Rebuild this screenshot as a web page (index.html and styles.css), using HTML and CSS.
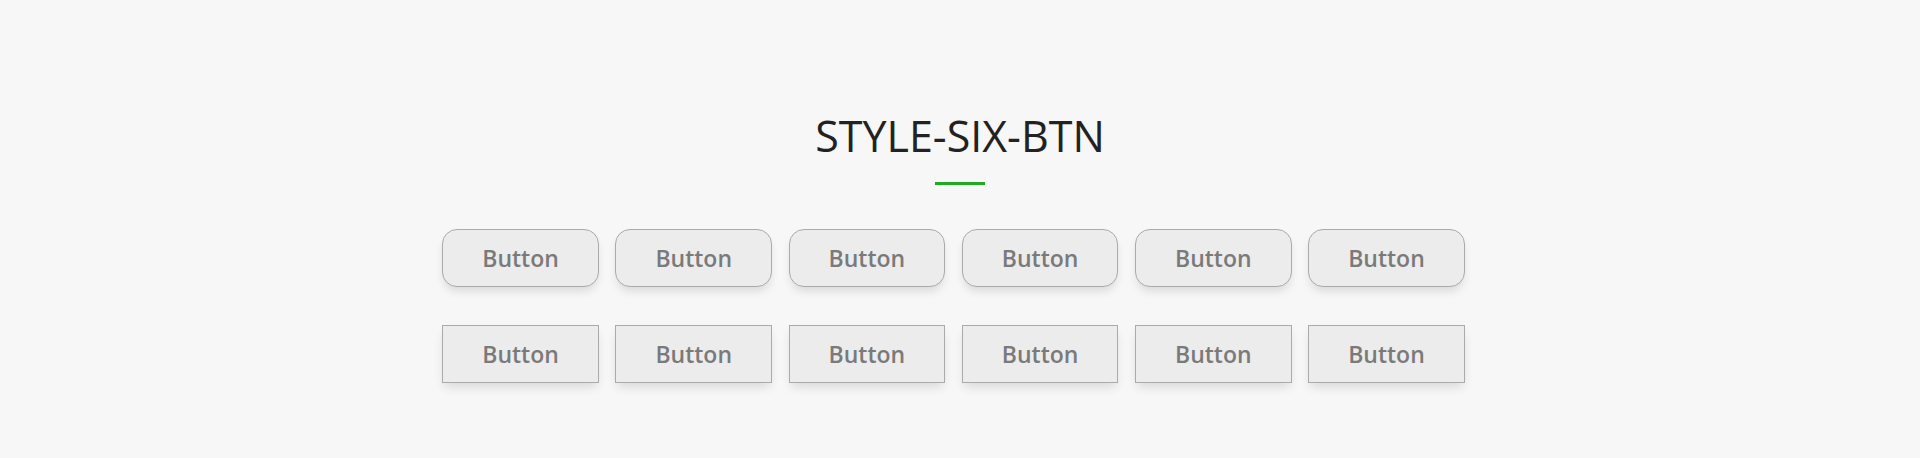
FILE: index.html
```html
<!DOCTYPE html>
<html lang="en">
<head>
<meta charset="utf-8">
<title>Style Six Btn</title>
<link rel="stylesheet" href="styles.css">
</head>
<body>
<section class="section">
  <h2 class="title">STYLE-SIX-BTN</h2>
  <div class="divider"></div>
  <div class="row">
    <button class="btn btn-round">Button</button>
    <button class="btn btn-round">Button</button>
    <button class="btn btn-round">Button</button>
    <button class="btn btn-round">Button</button>
    <button class="btn btn-round">Button</button>
    <button class="btn btn-round">Button</button>
  </div>
  <div class="row">
    <button class="btn btn-square">Button</button>
    <button class="btn btn-square">Button</button>
    <button class="btn btn-square">Button</button>
    <button class="btn btn-square">Button</button>
    <button class="btn btn-square">Button</button>
    <button class="btn btn-square">Button</button>
  </div>
</section>
</body>
</html>
```
FILE: styles.css
```css
html, body {
  margin: 0;
  padding: 0;
  background: #f7f7f7;
  font-family: "Open Sans", "Noto Sans", sans-serif;
}

.section {
  display: flex;
  flex-direction: column;
  align-items: center;
  padding-top: 106px;
}

.title {
  margin: 0;
  font-size: 43px;
  line-height: 60px;
  font-weight: 400;
  color: #222222;
}

.divider {
  width: 50px;
  height: 3px;
  background: #21a921;
  margin-top: 16px;
  margin-bottom: 44px;
}

.row {
  display: flex;
  gap: 16.7px;
  padding-right: 13px;
  margin-bottom: 38px;
}

.btn {
  box-sizing: border-box;
  width: 156.5px;
  height: 58px;
  border: 1px solid #aaaaaa;
  background: #ececec;
  color: #7a7a7a;
  font-family: "Open Sans", "Noto Sans", sans-serif;
  font-size: 23px;
  font-weight: 600;
  padding: 0;
  display: flex;
  align-items: center;
  justify-content: center;
  box-shadow: 0 6px 10px -2px rgba(0, 0, 0, 0.12);
}

.btn-round {
  border-radius: 15px;
}

.btn-square {
  border-radius: 0;
}
```
